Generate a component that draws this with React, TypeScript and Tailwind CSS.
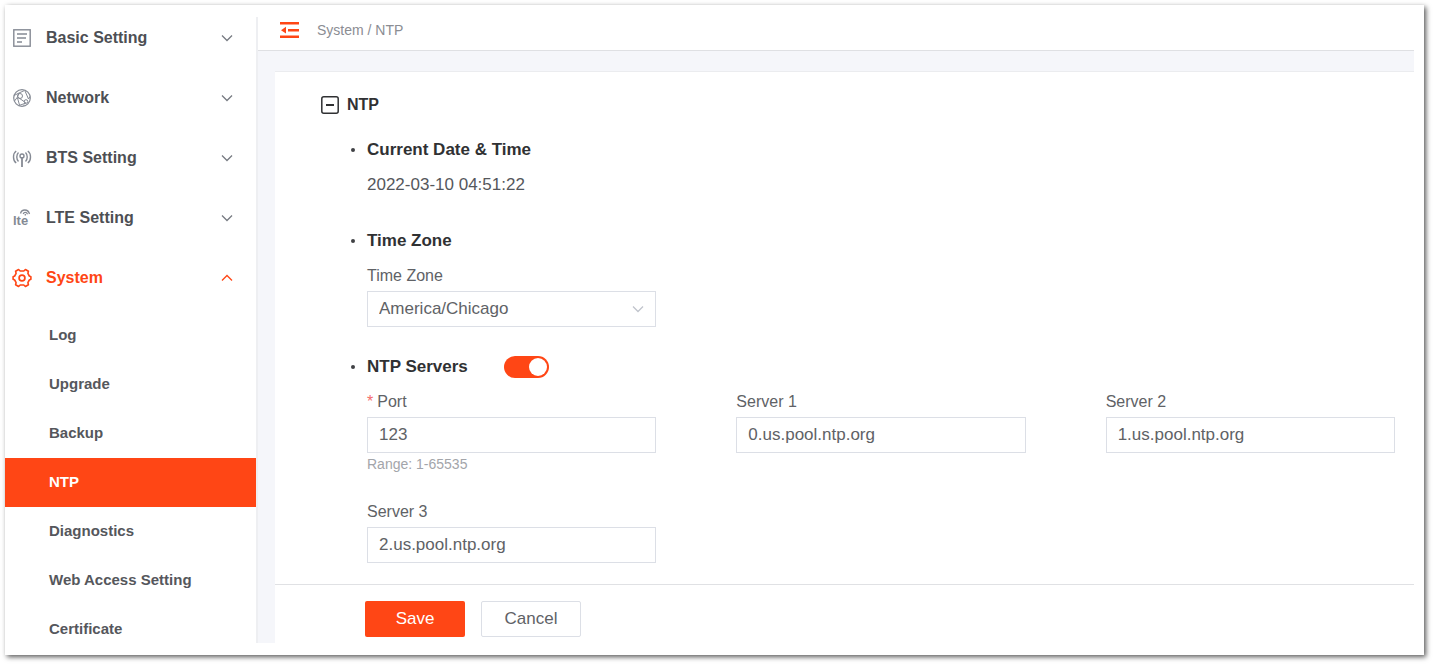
import { useState } from 'react';
import type { InputHTMLAttributes, ReactNode } from 'react';
import clsx from 'clsx';

function IconFrame({ children }: { children: ReactNode }) {
  return (
    <svg
      viewBox="0 0 20 20"
      className="size-5 shrink-0"
      fill="none"
      stroke="currentColor"
      strokeWidth="1.4"
      aria-hidden="true"
    >
      {children}
    </svg>
  );
}

const BasicIcon = () => (
  <IconFrame>
    <rect x="1.8" y="1.8" width="16.4" height="16.4" />
    <path d="M5 6h10M5 10h9M5 14h5" />
  </IconFrame>
);

const NetworkIcon = () => (
  <IconFrame>
    <circle cx="10" cy="10" r="8.3" strokeWidth="1.2" />
    <path
      strokeWidth="1"
      d="M2 7.500 7 5l5.500-2.500M7 5l-1.500 4 8 5.500M5.500 9l-3 4M13 3l3.500 8M16.500 11l1.500-2.500M14 15l-7 2.500M12 16.500V18M5.500 10l2 7"
    />
    <circle cx="8" cy="8" r="2.500" strokeWidth="1" />
    <circle cx="14" cy="13.500" r="1.800" strokeWidth="1" />
  </IconFrame>
);

const BtsIcon = () => (
  <IconFrame>
    <path
      d="M4.200 3C.600 5.500.600 12.500 4.200 15M15.800 3c3.600 2.500 3.600 9.500 0 12M6.500 4.500c-2.300 2.300-2.300 6.700 0 9M13.500 4.500c2.300 2.300 2.300 6.700 0 9"
      strokeWidth="1.400"
    />
    <circle cx="10" cy="8" r="2" />
    <path d="M10 9v10" strokeWidth="1.800" />
  </IconFrame>
);

const LteIcon = () => (
  <IconFrame>
    <text
      x="1"
      y="17"
      fontSize="13"
      fontWeight="700"
      fontFamily="Liberation Sans, sans-serif"
      fill="currentColor"
      stroke="none"
    >
      lte
    </text>
    <path d="M8.500 5.500C9.500 1 16 .5 17.500 6M11.200 6c.8-2.200 3.300-2.200 4.300.2" strokeWidth="1.300" />
    <path d="M13.300 6v1.500" strokeWidth="1.300" />
  </IconFrame>
);

const SystemIcon = () => (
  <IconFrame>
    <path
      strokeWidth="1.600"
      strokeLinejoin="round"
      d="M6.600 1.500 8.200 3h3.600l1.600-1.500 3 1.800-.5 2.100 1.400 2.600 1.600.7v2.600l-1.600.7-1.400 2.600.5 2.100-3 1.800L11.800 17H8.200l-1.600 1.500-3-1.800.5-2.100L2.700 12l-1.600-.7V8.700L2.700 8l1.400-2.600-.5-2.100z"
    />
    <circle cx="10" cy="10" r="2.900" strokeWidth="1.700" />
  </IconFrame>
);

function Chevron({ up = false, className }: { up?: boolean; className?: string }) {
  return (
    <svg
      viewBox="0 0 12 8"
      className={clsx('h-2 w-3 shrink-0', className)}
      fill="none"
      stroke="currentColor"
      strokeWidth="1.300"
      aria-hidden="true"
    >
      <path d={up ? 'M1 6.500 6 1.500l5 5' : 'M1 1.500l5 5 5-5'} />
    </svg>
  );
}

const sections = [
  { name: 'Basic Setting', Icon: BasicIcon },
  { name: 'Network', Icon: NetworkIcon },
  { name: 'BTS Setting', Icon: BtsIcon },
  { name: 'LTE Setting', Icon: LteIcon },
  { name: 'System', Icon: SystemIcon },
];

const systemPages = [
  'Log',
  'Upgrade',
  'Backup',
  'NTP',
  'Diagnostics',
  'Web Access Setting',
  'Certificate',
];

function Sidebar() {
  return (
    <nav className="w-[251px] shrink-0 pt-[3px] pb-px">
      {sections.map(({ name, Icon }) => {
        const open = name === 'System';
        return (
          <button
            key={name}
            type="button"
            aria-expanded={open}
            className={clsx(
              'flex h-[60px] w-full items-center gap-3.5 pr-[23px] pl-[7px] text-left text-base font-bold',
              open ? 'text-[#ff4615]' : 'text-[#4d4f54]',
            )}
          >
            <span className={clsx('flex', !open && 'text-[#858a94]')}>
              <Icon />
            </span>
            <span className="flex-1">{name}</span>
            <Chevron up={open} className={open ? 'text-[#ff4615]' : 'text-[#777b82]'} />
          </button>
        );
      })}
      <ul className="mt-[3px]">
        {systemPages.map((page) => (
          <li key={page}>
            <a
              href="#"
              aria-current={page === 'NTP' ? 'page' : undefined}
              className={clsx(
                'flex h-[49px] items-center pl-11 text-[15px] font-bold',
                page === 'NTP' ? 'bg-[#ff4615] text-white' : 'text-[#55575c]',
              )}
            >
              {page}
            </a>
          </li>
        ))}
      </ul>
    </nav>
  );
}

const control =
  'h-9 w-full rounded-none border border-[#dcdfe6] bg-white px-[11px] text-[17px] text-[#606266] outline-none focus:border-[#ff4615]';

type FieldProps = InputHTMLAttributes<HTMLInputElement> & {
  id: string;
  label: string;
  hint?: string;
};

function Field({ id, label, hint, required, ...rest }: FieldProps) {
  return (
    <div>
      <label htmlFor={id} className="flex h-[30px] items-center gap-1 text-base text-[#606266]">
        {required && <span className="text-[#f56c6c]">*</span>}
        {label}
      </label>
      <input id={id} required={required} className={control} {...rest} />
      {hint && <p className="h-6 text-sm leading-[22px] text-[#a3a5aa]">{hint}</p>}
    </div>
  );
}

function Heading({ children }: { children: ReactNode }) {
  return (
    <h2 className="flex h-6 items-center gap-3 text-[17px] font-bold text-[#303133]">
      <span className="size-1 rounded-full bg-[#404145]" />
      {children}
    </h2>
  );
}

export default function App() {
  const [enabled, setEnabled] = useState(true);

  return (
    <div className="bg-white pt-[5px] pr-[9px] pb-[9px] pl-[5px] font-['Liberation_Sans',Arial,sans-serif]">
      <div className="flex bg-white shadow-[2px_2px_5px_rgba(0,0,0,0.65)]">
        <Sidebar />
        <div className="mt-3 mr-2.5 mb-3 flex min-w-0 flex-1 flex-col border-l-2 border-[#eeeff2]">
          <header className="flex h-[34px] items-center gap-[18px] border-b border-[#dfe0e3] pb-2 pl-[22px]">
            <button type="button" aria-label="Collapse menu" className="text-[#ff4615]">
              <svg viewBox="0 0 19 18" className="h-[18px] w-[19px]" fill="currentColor" aria-hidden="true">
                <path d="M0 1h19v2.500H0zM8 8h11v2.400H8zM0 14.500h19V17H0zM1 9.200 6 5.800v6.800z" />
              </svg>
            </button>
            <p className="text-sm text-[#8b8d93]">System / NTP</p>
          </header>
          <main className="flex flex-1 flex-col bg-[#f5f6fa] pt-5 pl-[17px]">
            <form
              className="flex flex-1 flex-col border-t border-[#ebecef] bg-white"
              onSubmit={(event) => event.preventDefault()}
            >
              <div className="flex-1 pr-[19px] pl-[46px]">
                <div className="flex h-[66px] items-center gap-2">
                  <button type="button" aria-label="Collapse NTP" className="text-[#303133]">
                    <svg viewBox="0 0 18 18" className="size-[18px]" fill="none" stroke="currentColor" strokeWidth="1.500" aria-hidden="true">
                      <rect x="0.800" y="0.800" width="16.400" height="16.400" rx="2" />
                      <path d="M5 9h8" strokeWidth="2" />
                    </svg>
                  </button>
                  <h1 className="text-base font-bold text-[#303133]">NTP</h1>
                </div>

                <section className="pl-[30px]">
                  <Heading>Current Date &amp; Time</Heading>
                  <p className="mt-[11px] pl-4 text-[17px] leading-6 text-[#55575c]">
                    2022-03-10 04:51:22
                  </p>
                </section>

                <section className="mt-8 pl-[30px]">
                  <Heading>Time Zone</Heading>
                  <div className="mt-2 grid grid-cols-3 gap-x-20 pl-4">
                    <div>
                      <label htmlFor="zone" className="flex h-[30px] items-center text-base text-[#606266]">
                        Time Zone
                      </label>
                      <div className="grid items-center">
                        <select
                          id="zone"
                          className={clsx(control, 'col-start-1 row-start-1 appearance-none')}
                        >
                          <option>America/Chicago</option>
                          <option>America/New_York</option>
                        </select>
                        <Chevron className="pointer-events-none col-start-1 row-start-1 mr-3 justify-self-end text-[#c0c4cc]" />
                      </div>
                    </div>
                  </div>
                </section>

                <section className="mt-7 pl-[30px]">
                  <div className="flex items-center gap-9">
                    <Heading>NTP Servers</Heading>
                    <label className="flex h-[22px] w-[45px] cursor-pointer items-center rounded-full bg-[#c0c4cc] px-0.5 has-checked:justify-end has-checked:bg-[#ff4615]">
                      <input
                        type="checkbox"
                        role="switch"
                        aria-label="NTP Servers"
                        checked={enabled}
                        onChange={(event) => setEnabled(event.target.checked)}
                        className="size-[18px] cursor-pointer appearance-none rounded-full bg-white"
                      />
                    </label>
                  </div>
                  <div className="mt-2 grid grid-cols-3 gap-x-20 gap-y-5 pl-4">
                    <Field id="port" label="Port" required defaultValue="123" hint="Range: 1-65535" />
                    <Field id="server1" label="Server 1" defaultValue="0.us.pool.ntp.org" />
                    <Field id="server2" label="Server 2" defaultValue="1.us.pool.ntp.org" />
                    <Field id="server3" label="Server 3" defaultValue="2.us.pool.ntp.org" />
                  </div>
                </section>
              </div>

              <footer className="flex gap-4 border-t border-[#e0e1e4] pt-4 pb-1.5 pl-[90px]">
                <button
                  type="submit"
                  className="h-9 w-[100px] rounded-xs bg-[#ff4615] text-[17px] text-white"
                >
                  Save
                </button>
                <button
                  type="button"
                  className="h-9 w-[100px] rounded-xs border border-[#dcdfe6] bg-white text-[17px] text-[#606266]"
                >
                  Cancel
                </button>
              </footer>
            </form>
          </main>
        </div>
      </div>
    </div>
  );
}
